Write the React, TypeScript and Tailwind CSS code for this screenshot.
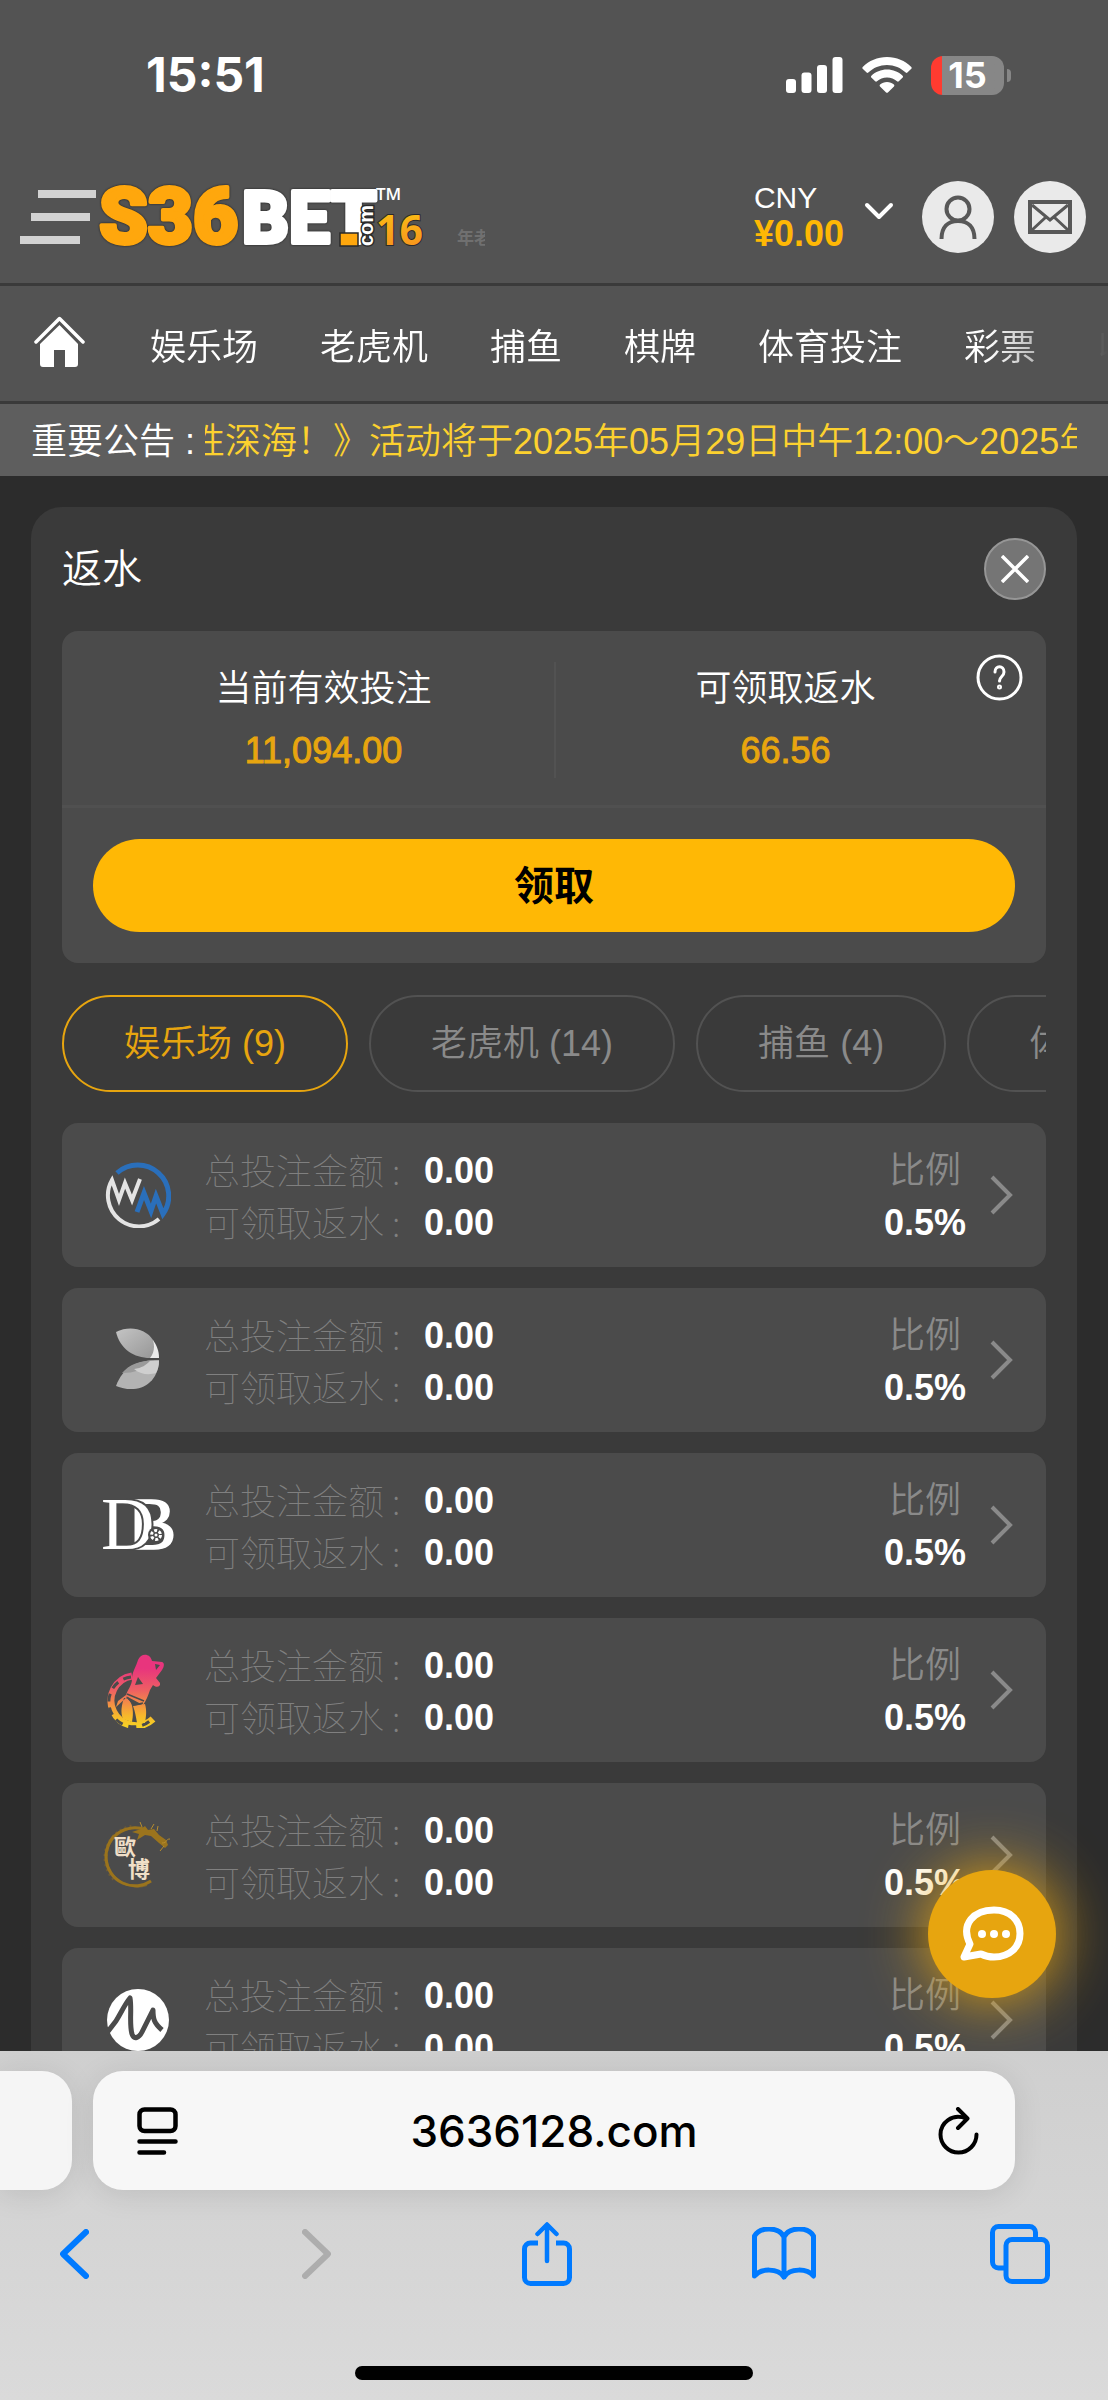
import type { ReactNode } from "react";
import clsx from "clsx";

const navItems = ["娱乐场", "老虎机", "捕鱼", "棋牌", "体育投注", "彩票", "收藏"];

const categories = [
  { name: "娱乐场", count: 9 },
  { name: "老虎机", count: 14 },
  { name: "捕鱼", count: 4 },
  { name: "体育投注", count: 6 },
];

type Provider = {
  id: string;
  logo: ReactNode;
  total: string;
  rebate: string;
  ratio: string;
};

const StatusBar = () => (
  <div className="flex h-[150px] items-center justify-between pl-[146px] pr-[97px]">
    <p className="font-['Inter',sans-serif] text-[48px] leading-none font-bold">15:51</p>
    <div className="flex items-center gap-[19px]">
      <svg viewBox="0 0 57 36" className="h-9 w-[57px]" fill="currentColor" aria-hidden="true">
        <rect x="0" y="22" width="10" height="14" rx="3" />
        <rect x="15.5" y="15.5" width="10" height="20.5" rx="3" />
        <rect x="31" y="8" width="10" height="28" rx="3" />
        <rect x="46.5" y="0" width="10" height="36" rx="3" />
      </svg>
      <svg viewBox="0 0 50 36" className="h-9 w-[50px]" fill="currentColor" aria-hidden="true">
        <path d="M25 0C34.5 0 43.1 3.8 49.3 10 49.8 10.6 49.8 11.3 49.3 11.8L45.4 15.6C44.9 16 44.2 16 43.7 15.6 38.8 10.8 32.2 8 25 8S11.2 10.8 6.3 15.6C5.8 16 5.1 16 4.6 15.6L.7 11.8C.2 11.3.2 10.6.7 10 6.9 3.8 15.5 0 25 0Z" />
        <path d="M25 12.6C31 12.6 36.5 14.9 40.6 18.7 41.2 19.3 41.2 20 40.7 20.5L36.8 24.3C36.3 24.8 35.6 24.8 35 24.3 32.4 22 28.9 20.5 25 20.5S17.6 22 15 24.3C14.4 24.8 13.7 24.8 13.2 24.3L9.3 20.5C8.8 20 8.8 19.3 9.4 18.7 13.5 14.9 19 12.6 25 12.6Z" />
        <path d="M25 25C27.7 25 30.1 26 31.9 27.6 32.5 28.1 32.5 28.9 32 29.4L25.9 35.4C25.4 35.9 24.6 35.9 24.1 35.4L18 29.4C17.5 28.9 17.5 28.1 18.1 27.6 19.9 26 22.3 25 25 25Z" />
      </svg>
      <div className="flex items-center gap-[3px]">
        <p className="h-[39px] w-[73px] rounded-xl bg-linear-to-r from-[#ff3b30] from-15% to-[#878787] to-15% text-center font-['Inter',sans-serif] text-[36px] leading-[39px] font-bold">
          15
        </p>
        <span className="h-[13px] w-1 rounded-r-full bg-[#878787]" />
      </div>
    </div>
  </div>
);

const Logo = () => (
  <svg viewBox="0 0 330 68" className="h-[68px] w-[330px]" aria-label="S36BET.com 16">
    <defs>
      <linearGradient id="logo16" x1="0" y1="0" x2="0" y2="1">
        <stop offset="0.2" stopColor="#fabb15" />
        <stop offset="0.9" stopColor="#f7901e" />
      </linearGradient>
    </defs>
    <g
      className="[filter:drop-shadow(0_0_1px_#1e1e1e)]"
      fontFamily="Roboto, sans-serif"
      fontWeight="900"
      strokeWidth="4"
      strokeLinejoin="round"
    >
      <text x="3" y="60" fontSize="78" fill="#ffa70d" stroke="#ffa70d">S36</text>
      <text x="146" y="60" fontSize="73" fill="#fff" stroke="#fff">BET</text>
    </g>
    <path d="M244 50h18v13h-18z" fill="#ffa70d" stroke="#2a2a2a" strokeWidth="1.500" />
    <text transform="translate(277 63) rotate(-90)" fontFamily="Liberation Sans, sans-serif" fontWeight="700" fontSize="20" fill="#fff" stroke="#2a2a2a" strokeWidth="3" paintOrder="stroke">com</text>
    <text x="280" y="17" fontFamily="Open Sans, sans-serif" fontWeight="600" fontSize="17" fill="#fff">TM</text>
    <text x="280" y="62" fontFamily="Open Sans, sans-serif" fontWeight="700" fontSize="41" fill="url(#logo16)" stroke="#2a2a2a" strokeWidth="2" paintOrder="stroke">16</text>
  </svg>
);

const Header = () => (
  <header className="flex h-[136px] items-center border-b-[3px] border-[#3a3a3a] pr-[22px] pl-5">
    <button aria-label="菜单" className="shrink-0">
      <svg viewBox="0 0 76 54" className="h-[54px] w-[76px]" fill="#d2d2d2" aria-hidden="true">
        <path d="M18 0h58v8H18zM11 23h59v8H11zM0 46h60v8H0z" />
      </svg>
    </button>
    <a href="#" className="shrink-0">
      <Logo />
    </a>
    <p className="mt-11 ml-[31px] w-[28px] shrink-0 overflow-hidden text-[17px] leading-6 font-bold whitespace-nowrap text-[#707070]">年老品牌</p>
    <div className="ml-auto flex items-center">
      <button className="flex items-center gap-5 text-left">
        <span className="flex flex-col">
          <span className="text-[30px] leading-[34px]">CNY</span>
          <span className="text-[36px] leading-[38px] font-bold text-[#ffb805]">¥0.00</span>
        </span>
        <svg viewBox="0 0 30 18" className="-mt-3 h-[18px] w-[30px]" fill="none" stroke="currentColor" strokeWidth="4" strokeLinecap="round" strokeLinejoin="round" aria-hidden="true">
          <path d="M3 3l12 12L27 3" />
        </svg>
      </button>
      <div className="ml-7 flex gap-5">
        <button aria-label="我的账户" className="grid size-[72px] place-items-center rounded-full bg-[#eaeaea]">
          <svg viewBox="0 0 40 46" className="h-[46px] w-10" fill="none" stroke="#585858" strokeWidth="4" aria-hidden="true">
            <circle cx="20" cy="15" r="11.5" />
            <path d="M3.500 45C3.500 33 10 27 20 27s16.500 6 16.500 18" />
          </svg>
        </button>
        <button aria-label="信息" className="grid size-[72px] place-items-center rounded-full bg-[#eaeaea]">
          <svg viewBox="0 0 44 34" className="h-[34px] w-11" fill="none" stroke="#585858" strokeWidth="3" aria-hidden="true">
            <path d="M2 2h40v30H2z" strokeWidth="4" />
            <path d="M4 5l18 15L40 5M4 30l14-13M40 30L26 17" />
          </svg>
        </button>
      </div>
    </div>
  </header>
);

const Nav = () => (
  <nav className="flex h-[118px] items-center border-b-[3px] border-[#3a3a3a] pl-[34px]">
    <a href="#" aria-label="首页" className="mr-[65px] shrink-0 pb-1">
      <svg viewBox="0 0 51 51" className="size-[51px]" fill="currentColor" aria-hidden="true">
        <path d="M2 26L25.500 2.500 49 26" fill="none" stroke="currentColor" strokeWidth="3.500" strokeLinecap="round" strokeLinejoin="round" />
        <path d="M25.500 9L44 28v20a3 3 0 0 1-3 3H31V34H20v17H9a3 3 0 0 1-3-3V28z" />
      </svg>
    </a>
    <ul className="flex min-w-0 flex-1 gap-[62px] overflow-hidden pt-2 [mask-image:linear-gradient(to_right,black_calc(100%-120px),transparent)]">
      {navItems.map((item) => (
        <li key={item} className="shrink-0">
          <a href="#" className="text-[36px] leading-[54px] font-[350] whitespace-nowrap">
            {item}
          </a>
        </li>
      ))}
    </ul>
  </nav>
);

const Announcement = () => (
  <div className="flex h-[72px] items-center bg-[#5e5e5e] px-[31px] pt-1 text-[36px] leading-[54px] font-[350] whitespace-nowrap">
    <p className="w-[174px] shrink-0">重要公告 :</p>
    <p className="flex min-w-0 flex-1 overflow-hidden text-[#fcd12f]">
      <span className="-ml-4">性深海！》活动将于2025年05月29日中午12:00～2025年06月</span>
    </p>
  </div>
);

const Summary = () => (
  <section className="relative rounded-2xl bg-[#4b4b4b]">
    <dl className="grid grid-cols-2 border-b-[3px] border-[#505050] px-[31px] pt-[31px] pb-[27px] text-center text-[36px]">
      <div>
        <dt className="leading-[54px] font-[350]">当前有效投注</dt>
        <dd className="pt-2 leading-[54px] text-[#e7a50f] [-webkit-text-stroke:1px_#e7a50f]">11,094.00</dd>
      </div>
      <div className="border-l-2 border-[#525252]">
        <dt className="leading-[54px] font-[350]">可领取返水</dt>
        <dd className="pt-2 leading-[54px] text-[#e7a50f] [-webkit-text-stroke:1px_#e7a50f]">66.56</dd>
      </div>
    </dl>
    <button aria-label="返水说明" className="absolute top-[23px] right-[23px]">
      <svg viewBox="0 0 47 47" className="size-[47px]" fill="none" stroke="currentColor" strokeWidth="3" strokeLinecap="round" aria-hidden="true">
        <circle cx="23.500" cy="23.500" r="21.500" />
        <path d="M19 18c0-7 9-7 9 0 0 4.500-4.500 4.500-4.500 9" />
        <circle cx="23.500" cy="33" r="1" />
      </svg>
    </button>
    <div className="p-[31px]">
      <button className="h-[93px] w-full rounded-full bg-[#ffb805] text-[40px] font-bold text-black">领取</button>
    </div>
  </section>
);

const CategoryTabs = () => (
  <div className="mt-8 flex gap-[21px] overflow-hidden">
    {categories.map((category, index) => (
      <button
        key={category.name}
        className={clsx(
          "h-[97px] shrink-0 rounded-full border-2 px-[60px] text-[36px] leading-[54px] font-[350] whitespace-nowrap",
          index === 0 ? "border-[#e7a50f] text-[#e7a50f]" : "border-[#525252] text-[#8a8a8a]",
        )}
      >
        {category.name} ({category.count})
      </button>
    ))}
  </div>
);

const WmLogo = () => (
  <svg viewBox="0 0 66 66" className="size-[66px]" fill="none" aria-hidden="true">
    <path d="M12 11A31 31 0 0 1 58 52L51 34 46 49 39 31 32 50" stroke="#2a6fbb" strokeWidth="5" />
    <path d="M54 57A31 31 0 0 1 7 18L14 38 20 21 27 38 35 17" stroke="#e4e4e4" strokeWidth="4" />
  </svg>
);

const WingLogo = () => (
  <svg viewBox="0 0 66 66" className="size-[66px]" aria-hidden="true">
    <defs>
      <linearGradient id="wing" x1="0" y1="0" x2="1" y2="1">
        <stop offset="0" stopColor="#c4c4c4" />
        <stop offset="1" stopColor="#979797" />
      </linearGradient>
    </defs>
    <path d="M48 13c4 6 6 11 6 18H43z" fill="#ececec" />
    <path d="M11 5C25-2 41 2 48 13c2 7 1 13-3 18C29 31 15 22 11 5z" fill="url(#wing)" />
    <path d="M54 33C32 33 18 40 11 59c19 8 42 1 43-26z" fill="#b3b3b3" />
    <path d="M54 33C34 33 24 38 17 46c12 0 22-3 28-12z" fill="#9a9a9a" />
    <path d="M45 34h9c0 5-1 8-3 12-6 2-15 2-22-4 8-1 12-4 16-8z" fill="#cfcfcf" />
  </svg>
);

const DbLogo = () => (
  <svg viewBox="0 0 72 66" className="h-[66px] w-[72px]" aria-hidden="true">
    <g fontFamily="Liberation Serif, serif" fontSize="74" fill="#fff">
      <text x="25" y="57" stroke="#fff" strokeWidth="1.500">B</text>
      <text x="-1" y="57" stroke="#4b4b4b" strokeWidth="4" paintOrder="stroke">D</text>
    </g>
    <circle cx="54" cy="43" r="8" fill="#4b4b4b" />
    <circle cx="54" cy="43" r="4.500" fill="none" stroke="#fff" strokeWidth="3" strokeDasharray="3 1.700" />
    <circle cx="54" cy="43" r="1.500" fill="#fff" />
  </svg>
);

const SexyLogo = () => (
  <svg viewBox="0 0 66 76" className="h-[76px] w-[66px]" aria-hidden="true">
    <defs>
      <linearGradient id="sexy" gradientUnits="userSpaceOnUse" x1="0" y1="2" x2="0" y2="74">
        <stop offset="0.2" stopColor="#e8357d" />
        <stop offset="0.5" stopColor="#ee5f63" />
        <stop offset="0.85" stopColor="#f7b62c" />
        <stop offset="1" stopColor="#f5cf25" />
      </linearGradient>
    </defs>
    <path d="M27 24A25 25 0 1 0 48 67" fill="none" stroke="url(#sexy)" strokeWidth="7" />
    <path d="M26 25A25 25 0 1 0 47 67" fill="none" stroke="#4b4b4b" strokeWidth="3" strokeDasharray="8 6" />
    <g fill="url(#sexy)">
      <path d="M33 8C36 1 45 1 47 9L57 10C60 11 59 15 57 18L51 26 55 31C56 35 51 36 48 33L45 38C43 44 41 49 38 53L21 44C22 38 27 34 27 27 27 20 31 15 33 8z" />
      <path d="M21 43L13 49 11 55 22 45zM19 46C26 45 30 57 27 70L18 67C15 60 17 52 19 46zM28 54L40 52C42 59 41 65 40 71L32 71C31 65 30 59 28 54z" />
    </g>
    <path d="M50 12l5 1-4 5zM33 25l5 7-8 1z" fill="#4b4b4b" />
    <path d="M22 42l17 7M23 46l6 7 9-2" stroke="#4b4b4b" strokeWidth="1.500" fill="none" />
  </svg>
);

const AllbetLogo = () => (
  <svg viewBox="0 0 72 72" className="size-[72px]" aria-hidden="true">
    <g fill="none" stroke="#9b741d">
      <path d="M49 62A29 29 0 1 1 44 11" strokeWidth="3" />
      <path d="M45 66A31 31 0 0 1 12 16" strokeWidth="2" opacity="0.6" />
      <path d="M12 60A31 31 0 0 1 30 8" strokeWidth="4" strokeDasharray="2 3" opacity="0.4" />
    </g>
    <path d="M30 13l9-3 4-3 3 4 6-1 5 6 7 5 2 5-3 3-6-5-8-7-6-1-8 5 2-6z" fill="#9b741d" />
    <path d="M60 24c6 0 3-4 8-4M40 8l-2-5M49 10l3-5M55 12l1-5M62 27l-4 5" stroke="#b78d2e" fill="none" />
    <g fontFamily="Noto Sans CJK TC, sans-serif" fontWeight="700" fontSize="22" fill="#f0dfc8">
      <text x="12" y="36">歐</text>
      <text x="26" y="58">博</text>
    </g>
  </svg>
);

const MgLogo = () => (
  <svg viewBox="0 0 62 62" className="size-[62px]" aria-hidden="true">
    <circle cx="31" cy="31" r="31" fill="#fff" />
    <path d="M-1 45L9 32C15 22 18 15 23 9c2 11-1 26 2 36 2 6 7 4 10-2l11-22c0 9 1 13 9 20" fill="none" stroke="#4b4b4b" strokeWidth="5" strokeLinejoin="round" />
  </svg>
);

const providers: Provider[] = [
  { id: "wm", logo: <WmLogo />, total: "0.00", rebate: "0.00", ratio: "0.5%" },
  { id: "evo", logo: <WingLogo />, total: "0.00", rebate: "0.00", ratio: "0.5%" },
  { id: "db", logo: <DbLogo />, total: "0.00", rebate: "0.00", ratio: "0.5%" },
  { id: "sexy", logo: <SexyLogo />, total: "0.00", rebate: "0.00", ratio: "0.5%" },
  { id: "allbet", logo: <AllbetLogo />, total: "0.00", rebate: "0.00", ratio: "0.5%" },
  { id: "mg", logo: <MgLogo />, total: "0.00", rebate: "0.00", ratio: "0.5%" },
];

type AmountLineProps = {
  label: string;
  value: string;
};
const AmountLine = ({ label, value }: AmountLineProps) => (
  <span className="flex h-[52px] items-start">
    <span className="w-[220px] font-['Noto_Sans_CJK_SC',sans-serif] leading-[48px] font-thin text-[#808080]">{label} :</span>
    <span className="font-bold">{value}</span>
  </span>
);

const ProviderRow = ({ logo, total, rebate, ratio }: Provider) => (
  <button className="flex h-36 w-full items-center rounded-2xl bg-[#4b4b4b] pr-8 text-left text-[36px] leading-[52px]">
    <span className="ml-[31px] flex w-[90px] shrink-0 justify-center">{logo}</span>
    <span className="ml-[21px] flex flex-1 flex-col pt-1">
      <AmountLine label="总投注金额" value={total} />
      <AmountLine label="可领取返水" value={rebate} />
    </span>
    <span className="flex flex-col items-center pt-1">
      <span className="h-[52px] font-[350] text-[#8a8a8a]">比例</span>
      <span className="h-[52px] font-bold">{ratio}</span>
    </span>
    <svg viewBox="0 0 24 40" className="ml-6 h-10 w-6" fill="none" stroke="#8a8a8a" strokeWidth="4" aria-hidden="true">
      <path d="M2 2l18 18L2 38" />
    </svg>
  </button>
);

const ChatButton = () => (
  <button aria-label="在线客服" className="absolute right-[52px] bottom-[53px] grid size-32 place-items-center rounded-full bg-[#e7a50f] shadow-[0_0_62px_#e7a50f]">
    <svg viewBox="0 0 64 56" className="h-14 w-16" fill="none" aria-hidden="true">
      <path d="M10 38C0 18 14 4 34 4c16 0 26 10 26 23.500S50 51 34 51c-5 0-9-1-13-3L4 51z" stroke="#fff" strokeWidth="7" strokeLinejoin="round" />
      <g fill="#fff">
        <circle cx="22" cy="28" r="4" />
        <circle cx="34" cy="28" r="4" />
        <circle cx="46" cy="28" r="4" />
      </g>
    </svg>
  </button>
);

const BrowserBar = () => (
  <footer className="shrink-0 overflow-hidden bg-[#d4d4d4] bg-linear-to-b from-[#cfcfcf] to-[#dadada] pt-5 pb-5">
    <div className="flex gap-[21px]">
      <div className="h-[119px] w-[72px] shrink-0 rounded-r-[30px] bg-[#f5f5f5] shadow-[0_4px_30px_rgba(0,0,0,0.1)]" />
      <div className="mr-[93px] flex h-[119px] min-w-0 flex-1 items-center justify-between rounded-[30px] bg-[#f7f7f7] pr-9 pl-11 text-black shadow-[0_4px_30px_rgba(0,0,0,0.1)]">
        <button aria-label="页面菜单">
          <svg viewBox="0 0 41 48" className="h-12 w-[41px]" fill="none" stroke="currentColor" strokeWidth="4.500" strokeLinecap="round" aria-hidden="true">
            <rect x="2.500" y="2.500" width="36" height="21.500" rx="5" />
            <path d="M2.500 34.500h36M2.500 45.500H27" />
          </svg>
        </button>
        <p className="pr-2 font-['Inter',sans-serif] text-[44px] leading-none font-medium">3636128.com</p>
        <button aria-label="刷新">
          <svg viewBox="0 0 41 48" className="h-12 w-[41px]" fill="none" stroke="currentColor" strokeWidth="4" strokeLinecap="round" strokeLinejoin="round" aria-hidden="true">
            <path d="M28 11.500C14 6 2.500 16 2.500 27.500a18 18 0 0 0 36 0" />
            <path d="M20 2l9.500 9.500L20 21" />
          </svg>
        </button>
      </div>
    </div>
    <div className="mt-8 flex h-16 items-center justify-between pr-14 pl-[42px] text-[#007aff]">
      <button aria-label="后退" className="flex w-16 justify-center">
        <svg viewBox="0 0 29 50" className="h-[50px] w-[29px]" fill="none" stroke="currentColor" strokeWidth="6" strokeLinecap="round" strokeLinejoin="round" aria-hidden="true">
          <path d="M26 3L3 25l23 22" />
        </svg>
      </button>
      <button aria-label="前进" disabled className="flex w-16 justify-center pl-3 text-[#adadad]">
        <svg viewBox="0 0 29 50" className="h-[50px] w-[29px]" fill="none" stroke="currentColor" strokeWidth="6" strokeLinecap="round" strokeLinejoin="round" aria-hidden="true">
          <path d="M3 3l23 22L3 47" />
        </svg>
      </button>
      <button aria-label="分享" className="flex w-16 justify-center">
        <svg viewBox="0 0 50 64" className="h-16 w-[50px]" fill="none" stroke="currentColor" strokeWidth="5" strokeLinecap="round" strokeLinejoin="round" aria-hidden="true">
          <path d="M16 21H8.500a6 6 0 0 0-6 6v28.500a6 6 0 0 0 6 6h33a6 6 0 0 0 6-6V27a6 6 0 0 0-6-6H34" strokeLinecap="butt" />
          <path d="M25 39V3M15.500 12L25 2.500 34.500 12" strokeWidth="4.500" />
        </svg>
      </button>
      <button aria-label="书签" className="flex w-16 justify-center">
        <svg viewBox="0 0 64 54" className="h-[54px] w-16" fill="none" stroke="currentColor" strokeWidth="5" strokeLinecap="round" strokeLinejoin="round" aria-hidden="true">
          <path d="M32 10C27-.5 8-.5 2.500 9v40C9 41 26 41 32 50 38 41 55 41 61.500 49V9C56-.5 37-.5 32 10zM32 10v40" />
        </svg>
      </button>
      <button aria-label="标签页" className="flex w-16 justify-center">
        <svg viewBox="0 0 60 60" className="size-[60px]" fill="none" stroke="currentColor" strokeWidth="5" aria-hidden="true">
          <path d="M15 44H8.500a6 6 0 0 1-6-6V8.500a6 6 0 0 1 6-6h31a6 6 0 0 1 6 6V15" />
          <rect x="16" y="15.500" width="41.500" height="42" rx="6" />
        </svg>
      </button>
    </div>
    <div className="mx-auto mt-20 h-[14px] w-[398px] rounded-full bg-black" />
  </footer>
);

export default function App() {
  return (
    <div className="flex h-screen flex-col overflow-hidden bg-[#2c2c2c] font-['Liberation_Sans','Noto_Sans_CJK_SC',sans-serif] text-white">
      <div className="shrink-0 bg-[#535353]">
        <StatusBar />
        <Header />
        <Nav />
        <Announcement />
      </div>
      <div className="relative min-h-0 flex-1 overflow-hidden px-[31px] pt-[31px]">
        <main className="rounded-t-[31px] bg-[#3a3a3a] px-[31px] pt-[31px] pb-[31px]">
          <div className="mb-[31px] flex items-center justify-between">
            <h1 className="text-[40px] leading-[62px] font-[350]">返水</h1>
            <button aria-label="关闭" className="grid size-[62px] place-items-center rounded-full border-2 border-[#969696] bg-[#757575]">
              <svg viewBox="0 0 28 28" className="size-7" fill="none" stroke="currentColor" strokeWidth="3.500" aria-hidden="true">
                <path d="M1 1l26 26M27 1L1 27" />
              </svg>
            </button>
          </div>
          <Summary />
          <CategoryTabs />
          <ul className="mt-[31px] flex flex-col gap-[21px]">
            {providers.map((provider) => (
              <li key={provider.id}>
                <ProviderRow {...provider} />
              </li>
            ))}
          </ul>
        </main>
        <ChatButton />
      </div>
      <BrowserBar />
    </div>
  );
}
